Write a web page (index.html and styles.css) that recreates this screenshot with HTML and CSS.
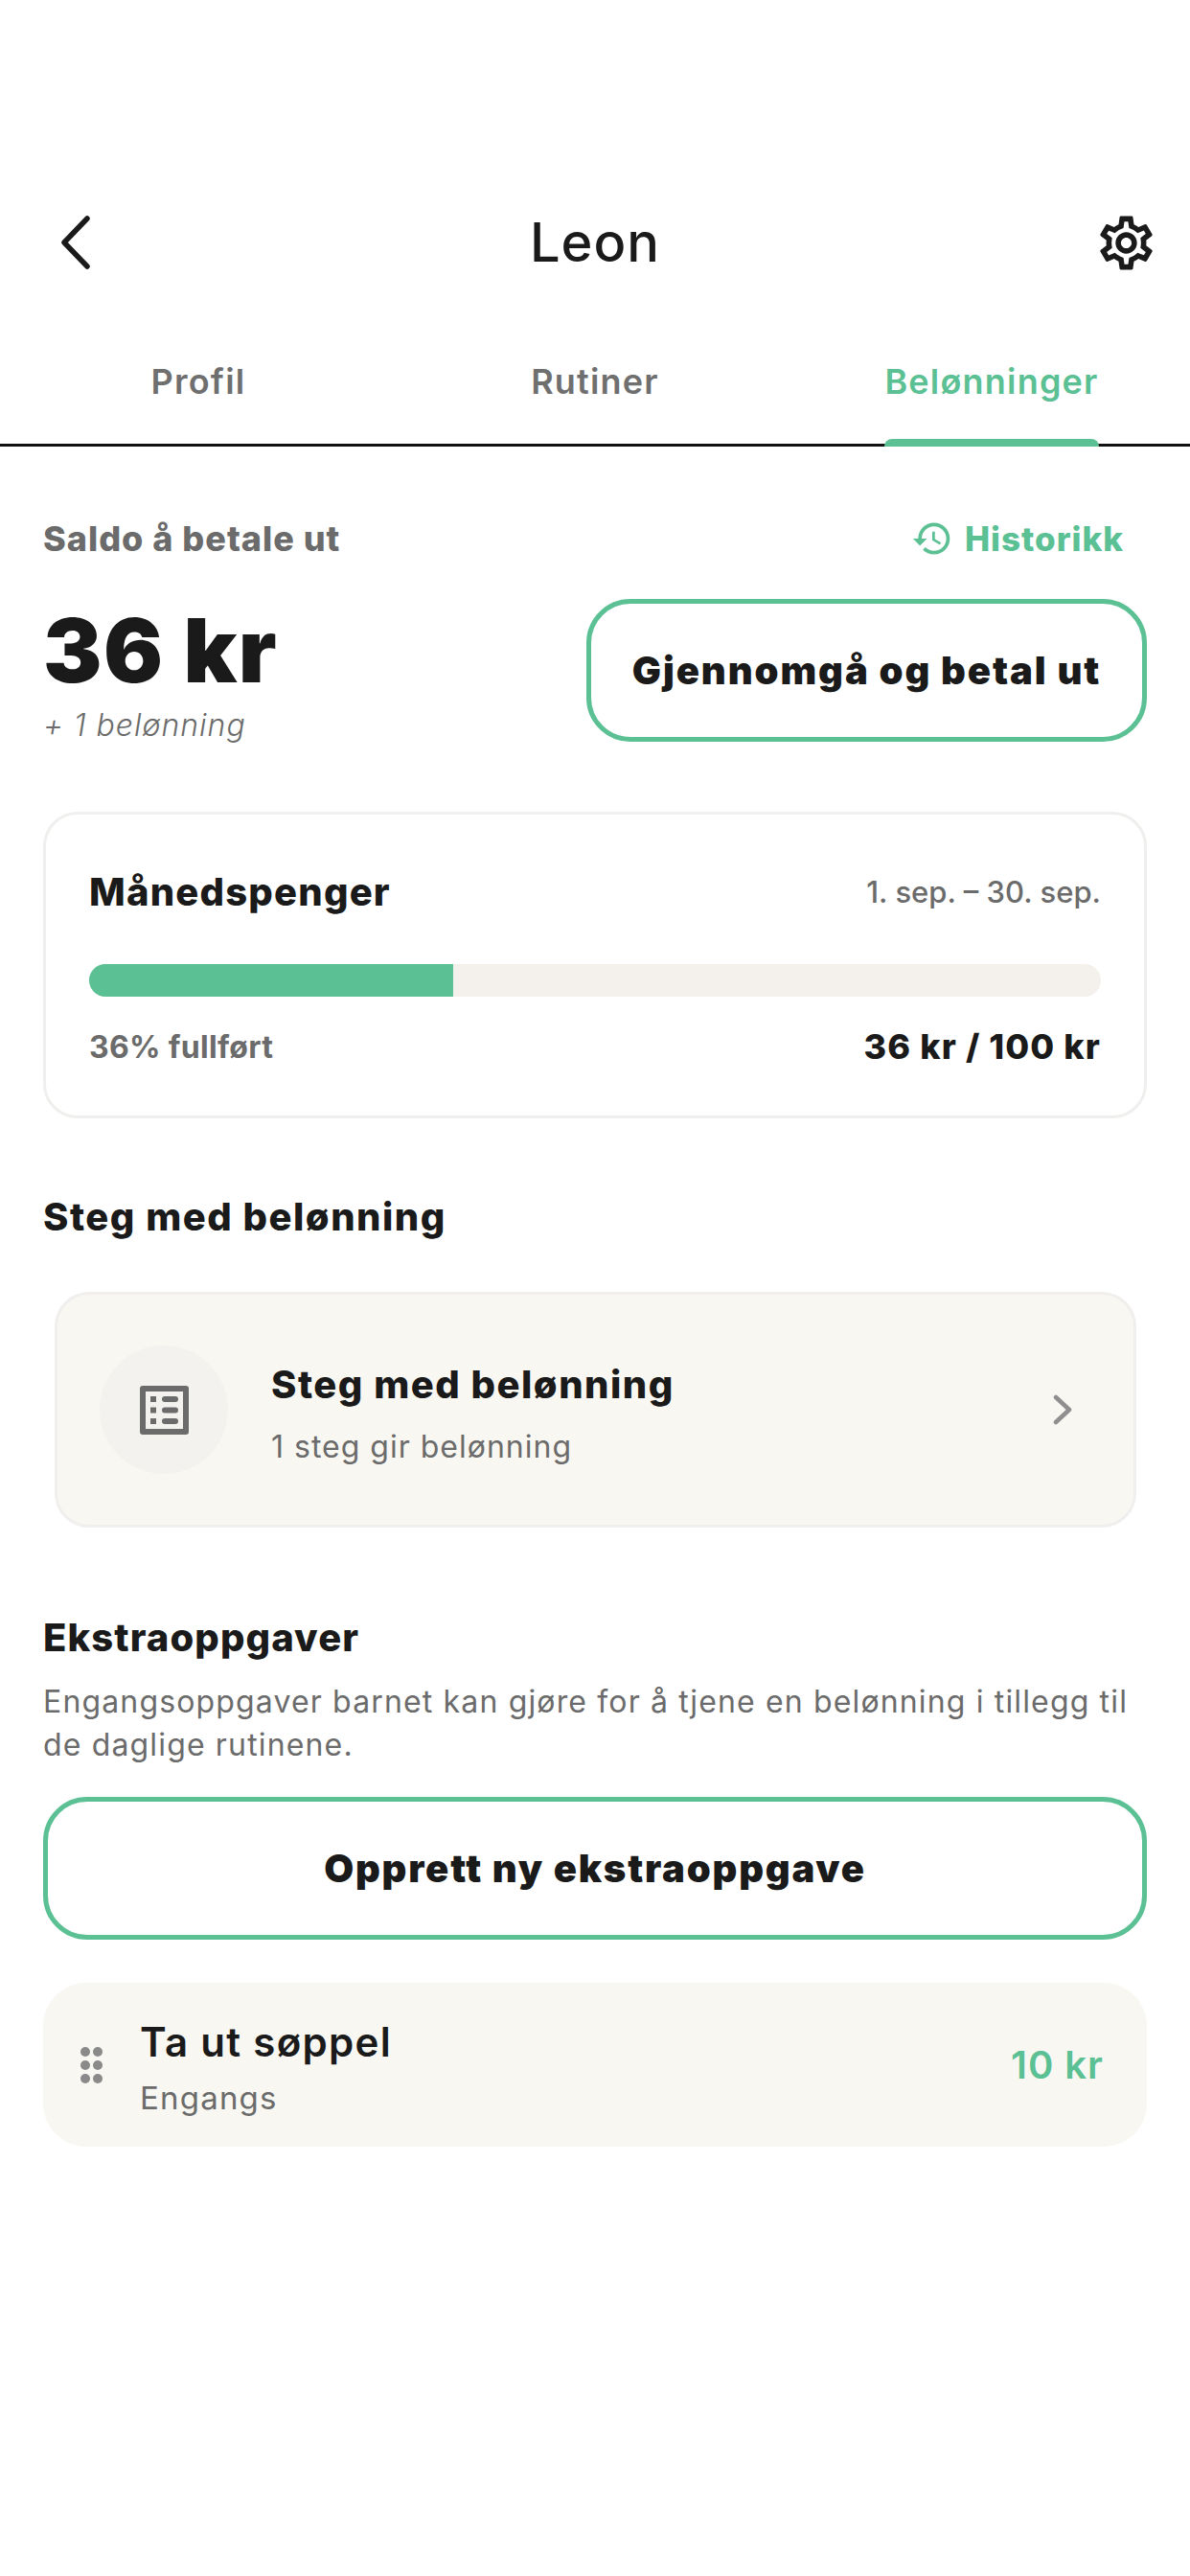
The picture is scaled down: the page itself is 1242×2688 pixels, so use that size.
FILE: index.html
```html
<!DOCTYPE html>
<html lang="nb">
<head>
  <meta charset="UTF-8" />
  <meta name="viewport" content="width=device-width, initial-scale=1.0"/>
  <title>Leon</title>
  <link rel="stylesheet" href="styles.css">
</head>
<body>
  <div class="screen">
    <header class="top-bar">
      <button class="icon-button back-button" aria-label="Tilbake">
        <svg class="icon-back" viewBox="0 0 34 58" fill="none" stroke="#1a1a1a" stroke-width="5.5" stroke-linecap="round" stroke-linejoin="round"><path d="M29 4 L5 29 L29 54"/></svg>
      </button>
      <h1 class="title">Leon</h1>
      <button class="icon-button gear-button" aria-label="Innstillinger">
        <svg class="icon-gear" viewBox="0 0 24 24" fill="#1a1a1a"><path d="M19.43 12.98c.04-.32.07-.64.07-.98 0-.34-.03-.66-.07-.98l2.11-1.65c.19-.15.24-.42.12-.64l-2-3.46c-.09-.16-.26-.25-.44-.25-.06 0-.12.01-.17.03l-2.49 1c-.52-.4-1.08-.73-1.69-.98l-.38-2.65C14.46 2.18 14.25 2 14 2h-4c-.25 0-.46.18-.49.42l-.38 2.65c-.61.25-1.17.59-1.69.98l-2.49-1c-.06-.02-.12-.03-.18-.03-.17 0-.34.09-.43.25l-2 3.46c-.13.22-.07.49.12.64l2.11 1.65c-.04.32-.07.65-.07.98 0 .33.03.66.07.98l-2.11 1.65c-.19.15-.24.42-.12.64l2 3.46c.09.16.26.25.44.25.06 0 .12-.01.17-.03l2.49-1c.52.4 1.08.73 1.69.98l.38 2.65c.03.24.24.42.49.42h4c.25 0 .46-.18.49-.42l.38-2.65c.61-.25 1.17-.59 1.69-.98l2.49 1c.06.02.12.03.18.03.17 0 .34-.09.43-.25l2-3.46c.12-.22.07-.49-.12-.64l-2.11-1.65zm-1.98-1.71c.04.31.05.52.05.73 0 .21-.02.43-.05.73l-.14 1.13.89.7 1.08.84-.7 1.21-1.27-.51-1.04-.42-.9.68c-.43.32-.84.56-1.25.73l-1.06.43-.16 1.13-.2 1.35h-1.4l-.19-1.35-.16-1.13-1.06-.43c-.43-.18-.83-.41-1.23-.71l-.91-.7-1.06.43-1.27.51-.7-1.21 1.08-.84.89-.7-.14-1.13c-.03-.31-.05-.54-.05-.74s.02-.43.05-.73l.14-1.13-.89-.7-1.08-.84.7-1.21 1.27.51 1.04.42.9-.68c.43-.32.84-.56 1.25-.73l1.06-.43.16-1.13.2-1.35h1.39l.19 1.35.16 1.13 1.06.43c.43.18.83.41 1.23.71l.91.7 1.06-.43 1.27-.51.7 1.21-1.07.85-.89.7.14 1.13zM12 8c-2.21 0-4 1.79-4 4s1.79 4 4 4 4-1.79 4-4-1.79-4-4-4zm0 6c-1.1 0-2-.9-2-2s.9-2 2-2 2 .9 2 2-.9 2-2 2z"/></svg>
      </button>
    </header>

    <nav class="tabs">
      <div class="tab"><span class="tab-label">Profil</span></div>
      <div class="tab"><span class="tab-label">Rutiner</span></div>
      <div class="tab active"><span class="tab-label">Belønninger</span></div>
    </nav>

    <main class="content">
      <section class="balance">
        <div class="balance-top">
          <span class="balance-label">Saldo å betale ut</span>
          <a class="history-link">
            <svg class="icon-history" viewBox="0 0 24 24" fill="#5bc093"><path d="M13 3c-4.97 0-9 4.03-9 9H1l3.89 3.89.07.14L9 12H6c0-3.87 3.13-7 7-7s7 3.13 7 7-3.13 7-7 7c-1.93 0-3.68-.79-4.94-2.06l-1.42 1.42C8.27 19.99 10.51 21 13 21c4.97 0 9-4.03 9-9s-4.03-9-9-9zm-1 5v5l4.28 2.54.72-1.21-3.5-2.08V8H12z"/></svg>
            Historikk
          </a>
        </div>
        <div class="balance-main">
          <div class="balance-amount">
            <div class="amount">36 kr</div>
            <div class="amount-note">+ 1 belønning</div>
          </div>
          <button class="outline-button review-button">Gjennomgå og betal ut</button>
        </div>
      </section>

      <section class="allowance-card">
        <div class="allowance-head">
          <span class="allowance-title">Månedspenger</span>
          <span class="allowance-dates">1. sep. – 30. sep.</span>
        </div>
        <div class="progress"><div class="progress-fill" style="width: 36%"></div></div>
        <div class="allowance-foot">
          <span class="progress-text">36% fullført</span>
          <span class="progress-sum">36 kr / 100 kr</span>
        </div>
      </section>

      <h2 class="section-title steps-heading">Steg med belønning</h2>
      <div class="steps-card">
        <div class="steps-icon">
          <svg viewBox="0 0 51 51" fill="#6b6b6b">
            <path fill-rule="evenodd" d="M3 0h45a3 3 0 0 1 3 3v45a3 3 0 0 1-3 3H3a3 3 0 0 1-3-3V3a3 3 0 0 1 3-3zm3 6v39h39V6z"/>
            <rect x="11" y="11" width="6" height="6"/><rect x="11" y="22.5" width="6" height="6"/><rect x="11" y="34" width="6" height="6"/>
            <rect x="23" y="11" width="17" height="6" rx="3"/><rect x="23" y="22.5" width="17" height="6" rx="3"/><rect x="23" y="34" width="17" height="6" rx="3"/>
          </svg>
        </div>
        <div class="steps-text">
          <div class="steps-title">Steg med belønning</div>
          <div class="steps-sub">1 steg gir belønning</div>
        </div>
        <svg class="icon-chevron" viewBox="0 0 20 32" fill="none" stroke="#8f8f8f" stroke-width="4.5" stroke-linecap="round" stroke-linejoin="round"><path d="M3 3 L17 16 L3 29"/></svg>
      </div>

      <h2 class="section-title extra-heading">Ekstraoppgaver</h2>
      <p class="extra-desc">Engangsoppgaver barnet kan gjøre for å tjene en belønning i tillegg til de daglige rutinene.</p>
      <button class="outline-button create-button">Opprett ny ekstraoppgave</button>

      <div class="task-row">
        <div class="grip">
          <i></i><i></i><i></i><i></i><i></i><i></i>
        </div>
        <div class="task-text">
          <div class="task-title">Ta ut søppel</div>
          <div class="task-sub">Engangs</div>
        </div>
        <div class="task-reward">10 kr</div>
      </div>
    </main>
  </div>
</body>
</html>
```
FILE: styles.css
```css
* {
  box-sizing: border-box;
}
body {
  margin: 0;
  background-color: #fff;
  font-family: 'Inter', 'Noto Sans', sans-serif;
  color: #1a1a1a;
}
.screen {
  width: 1242px;
  height: 2688px;
  overflow: hidden;
  display: flex;
  flex-direction: column;
}
button {
  font-family: inherit;
  background: none;
  border: none;
  padding: 0;
  color: inherit;
}
.top-bar {
  height: 100px;
  margin-top: 203px;
  padding: 0 33px;
  display: grid;
  grid-template-columns: 1fr auto 1fr;
  align-items: center;
}
.icon-button {
  display: flex;
  align-items: center;
}
.back-button {
  margin-left: 29px;
}
.gear-button {
  justify-self: end;
}
.icon-back {
  width: 34px;
  height: 58px;
}
.icon-gear {
  width: 67px;
  height: 67px;
}
.title {
  margin: 0;
  font-size: 56px;
  font-weight: 500;
  line-height: 100px;
  letter-spacing: 1px;
}
.tabs {
  height: 163px;
  display: flex;
  border-bottom: 3px solid #111;
}
.tab {
  flex: 1;
  display: flex;
  justify-content: center;
  align-items: flex-end;
  margin-bottom: -3px;
  font-size: 36px;
  font-weight: 600;
  letter-spacing: 1.2px;
  color: #6f6f6f;
}
.tab-label {
  display: block;
  line-height: 44px;
}
.tab-label::after {
  content: "";
  display: block;
  height: 8px;
  margin-top: 38px;
  border-radius: 8px 8px 0 0;
}
.tab.active {
  color: #5bc093;
}
.tab.active .tab-label::after {
  background-color: #5bc093;
}
.content {
  padding: 0 45px;
  display: flex;
  flex-direction: column;
}
.balance-top {
  margin-top: 74px;
  display: flex;
  justify-content: space-between;
  align-items: center;
  padding-right: 24px;
  height: 44px;
}
.balance-label {
  font-size: 36px;
  font-weight: 800;
  letter-spacing: 1px;
  color: #6b6b6b;
}
.history-link {
  display: flex;
  align-items: center;
  gap: 12px;
  font-size: 35px;
  font-weight: 800;
  letter-spacing: 1px;
  color: #5bc093;
}
.icon-history {
  width: 44px;
  height: 44px;
}
.balance-main {
  margin-top: 41px;
  display: flex;
  justify-content: space-between;
}
.amount {
  font-size: 92px;
  font-weight: 900;
  line-height: 92px;
  letter-spacing: 1.5px;
  margin-top: 8px;
}
.amount-note {
  margin-top: 12px;
  font-size: 32px;
  font-style: italic;
  font-weight: 300;
  line-height: 40px;
  letter-spacing: 1px;
  color: #6b6b6b;
}
.outline-button {
  height: 149px;
  border: 5px solid #5bc093;
  border-radius: 46px;
  background-color: #fff;
  font-weight: 900;
  color: #1a1a1a;
}
.review-button {
  width: 585px;
  font-size: 40px;
  letter-spacing: 1.9px;
}
.allowance-card {
  margin-top: 70px;
  height: 320px;
  border: 3px solid #f0efed;
  border-radius: 36px;
  padding: 0 45px;
}
.allowance-head {
  margin-top: 55px;
  display: flex;
  justify-content: space-between;
  align-items: center;
  height: 50px;
}
.allowance-title {
  font-size: 40px;
  font-weight: 800;
  letter-spacing: 1.2px;
}
.allowance-dates {
  font-size: 31px;
  font-weight: 500;
  letter-spacing: 0;
  color: #6b6b6b;
}
.progress {
  margin-top: 51px;
  height: 34px;
  border-radius: 17px;
  background-color: #f4f1ec;
  overflow: hidden;
}
.progress-fill {
  height: 100%;
  background-color: #5bc093;
}
.allowance-foot {
  margin-top: 30px;
  display: flex;
  justify-content: space-between;
  align-items: center;
  height: 44px;
}
.progress-text {
  font-size: 32px;
  font-weight: 700;
  letter-spacing: 0.3px;
  color: #6b6b6b;
}
.progress-sum {
  font-size: 36px;
  font-weight: 800;
  letter-spacing: 1.1px;
}
.section-title {
  margin: 0;
  font-size: 40px;
  font-weight: 800;
  line-height: 50px;
  letter-spacing: 1.5px;
}
.steps-heading {
  margin-top: 78px;
}
.steps-card {
  margin: 53px 11px 0 12px;
  height: 246px;
  display: flex;
  align-items: center;
  padding: 0 64px 0 44px;
  background-color: #f9f7f2;
  border: 3px solid #f0efed;
  border-radius: 36px;
}
.steps-icon {
  width: 134px;
  height: 134px;
  border-radius: 50%;
  background-color: #f4f2ee;
  display: flex;
  align-items: center;
  justify-content: center;
  margin-right: 45px;
  flex-shrink: 0;
}
.steps-icon svg {
  width: 51px;
  height: 51px;
}
.steps-text {
  flex: 1;
  padding-top: 8px;
}
.steps-title {
  font-size: 40px;
  font-weight: 800;
  line-height: 50px;
  letter-spacing: 1.5px;
}
.steps-sub {
  margin-top: 20px;
  font-size: 32px;
  font-weight: 400;
  line-height: 40px;
  letter-spacing: 1px;
  color: #6b6b6b;
}
.icon-chevron {
  width: 20px;
  height: 32px;
}
.extra-heading {
  margin-top: 90px;
  letter-spacing: 1.1px;
}
.extra-desc {
  margin: 19px 0 0;
  font-size: 32px;
  line-height: 45px;
  letter-spacing: 1.15px;
  color: #6b6b6b;
}
.create-button {
  margin-top: 32px;
  width: 100%;
  font-size: 40px;
  letter-spacing: 1.8px;
}
.task-row {
  margin-top: 45px;
  height: 171px;
  display: flex;
  align-items: center;
  padding: 0 45px 0 39px;
  background-color: #f9f7f2;
  border-radius: 45px;
}
.grip {
  display: grid;
  grid-template-columns: repeat(2, 10px);
  gap: 4px 3px;
  margin-right: 39px;
}
.grip i {
  width: 10px;
  height: 10px;
  border-radius: 50%;
  background-color: #8a8a8a;
}
.task-text {
  flex: 1;
  padding-top: 6px;
}
.task-title {
  font-size: 42px;
  font-weight: 600;
  line-height: 52px;
  letter-spacing: 1.3px;
}
.task-sub {
  margin-top: 11px;
  font-size: 33px;
  line-height: 42px;
  letter-spacing: 1.2px;
  color: #6b6b6b;
}
.task-reward {
  font-size: 40px;
  font-weight: 600;
  letter-spacing: 1px;
  color: #5bc093;
}
```
